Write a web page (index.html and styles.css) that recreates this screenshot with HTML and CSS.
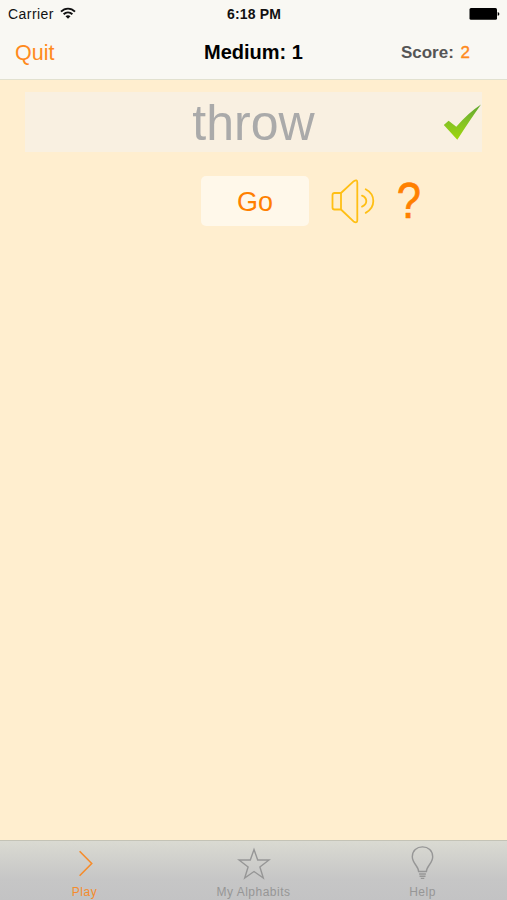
FILE: index.html
```
<!DOCTYPE html>
<html lang="en">
<head>
    <meta charset="UTF-8">
    <meta name="viewport" content="width=device-width, initial-scale=1.0">
    <title>Alphabits</title>
    <link rel="stylesheet" href="styles.css">
</head>
<body>

    <header class="header">
        <div class="status">
            <div class="carrier">
                <span>Carrier</span>
                <svg width="16" height="13" viewBox="0 0 16 13" fill="none" stroke="#111" stroke-width="1.9">
                    <path d="M1 4.7C5 .6 11 .6 15 4.7M3.6 7.3c2.6-2.5 6.2-2.5 8.8 0"/>
                    <path d="M5.5 9.2Q8 7.2 10.5 9.2L8 11.8z" fill="#111" stroke="none"/>
                </svg>
            </div>
            <div class="time">6:18 PM</div>
            <svg class="battery" width="31" height="14" viewBox="0 0 31 14">
                <rect x="0.5" y="1" width="27.5" height="11.7" rx="1.5"/>
                <path d="M28.7 5q1.7 .4 1.7 1.9t-1.7 1.9z"/>
            </svg>
        </div>
        <div class="navbar">
            <a class="quit">Quit</a>
            <h1 class="title">Medium: 1</h1>
            <div class="score">Score: <span>2</span></div>
        </div>
    </header>

    <main class="game">
        <div class="word">
            <span>throw</span>
            <svg class="check" width="39" height="37" viewBox="0 0 39 37">
                <defs>
                    <linearGradient id="green" x1="0" y1="0" x2="0" y2="1">
                        <stop offset="0" stop-color="#5fa52f"/>
                        <stop offset="0.45" stop-color="#82c026"/>
                        <stop offset="1" stop-color="#9fd70c"/>
                    </linearGradient>
                </defs>
                <path d="M.8 21L5.6 16.8 13.3 22.8Q25 9 38 .5 27 16 14.3 35.7z" fill="url(#green)"/>
            </svg>
        </div>
        <div class="controls">
            <button type="button" class="go">Go</button>
            <svg class="speaker" width="44" height="46" viewBox="0 0 44 46" fill="none" stroke="#ffbf14" stroke-width="1.8" stroke-linecap="round" stroke-linejoin="round">
                <path d="M10 15H3.5Q1.5 15 1.5 17V29.5Q1.5 31.5 3.5 31.5H10M10 15V31.5L22.5 43.4Q26.3 45.7 26.3 42.2V4.5Q26.3 1 22.8 3.2z"/>
                <path d="M31 17.6Q35.3 19.3 35.3 23.1T31 28.6M34.7 11.3Q42.3 15.3 42.3 23.1T34.7 34.9"/>
            </svg>
            <div class="hint">?</div>
        </div>
    </main>

    <nav class="tabs">
        <a class="tab active">
            <svg width="34" height="36" viewBox="0 0 34 36" fill="none" stroke="currentColor" stroke-width="1.6">
                <path d="M11.6 7.2L23.7 19.5 11.6 31.8"/>
            </svg>
            <span>Play</span>
        </a>
        <a class="tab">
            <svg width="34" height="36" viewBox="0 0 34 36" fill="none" stroke="currentColor" stroke-width="1.4">
                <path d="M17 5.5L20.7 16H32L22.9 22.9 26.3 34.1 17 27.5 7.7 34.1 11.1 22.9 2 16H13.3z"/>
            </svg>
            <span>My Alphabits</span>
        </a>
        <a class="tab">
            <svg width="34" height="36" viewBox="0 0 34 36" fill="none" stroke="currentColor" stroke-width="1.4">
                <path d="M12.6 27.5C12.6 22.3 6.3 19.3 6.3 12.7 6.3 6.7 10.8 2.9 16.5 2.9S26.7 6.7 26.7 12.7C26.7 19.3 20.4 22.3 20.4 27.5z"/>
                <path d="M13.1 30H19.9M13.5 32.2H19.5M14.8 34.4H18.3"/>
            </svg>
            <span>Help</span>
        </a>
    </nav>

</body>
</html>
```

FILE: styles.css
```
* {
    box-sizing: border-box;
}

body {
    margin: 0;
    height: 100vh;
    display: flex;
    flex-direction: column;
    background-color: #ffeecf;
    font-family: "Liberation Sans", Arial, sans-serif;
}

/* Header */
.header {
    height: 80px;
    background-color: #f9f8f3;
    border-bottom: 1px solid #e2e1cf;
}

.status {
    display: grid;
    grid-template-columns: 1fr auto 1fr;
    align-items: center;
    height: 27px;
    padding: 0 7px 0 8px;
    font-size: 14px;
    color: #111;
}

.carrier {
    display: flex;
    align-items: center;
    gap: 6px;
    letter-spacing: 0.45px;
}

.time {
    font-weight: bold;
    letter-spacing: 0.15px;
}

.battery {
    justify-self: end;
}

.navbar {
    display: grid;
    grid-template-columns: 1fr auto 1fr;
    align-items: center;
    height: 51px;
    padding: 0 37px 0 15px;
}

.quit {
    padding-top: 1px;
    font-size: 21.5px;
    color: #ff8a1c;
}

.title {
    margin: 0 0 0 22px;
    font-size: 20px;
    color: #000;
}

.score {
    justify-self: end;
    font-size: 17px;
    font-weight: bold;
    color: #555;
}

.score span {
    margin-left: 2px;
    font-weight: normal;
    color: #ff8a1c;
    -webkit-text-stroke: 0.4px #ff8a1c;
}

/* Game */
.game {
    flex: 1;
    padding: 12px 25px 0;
}

.word {
    position: relative;
    height: 60px;
    background-color: #f9f0e1;
    font-size: 50px;
    line-height: 62px;
    text-align: center;
    color: #aaa;
}

.check {
    position: absolute;
    top: 12px;
    right: 0;
}

.controls {
    display: flex;
    align-items: center;
    height: 50px;
    margin: 24px 0 0 176px;
}

.go {
    width: 108px;
    height: 50px;
    padding: 2px 0 0;
    border: none;
    border-radius: 5px;
    background-color: #fff8ea;
    font-family: inherit;
    font-size: 27px;
    color: #ff8000;
}

.speaker {
    margin-left: 22px;
}

.hint {
    margin-left: 20px;
    font-size: 50px;
    line-height: 50px;
    color: #ff8000;
    -webkit-text-stroke: 0.7px #ff8000;
    transform: scaleX(0.87);
}

/* Tab bar */
.tabs {
    display: flex;
    height: 60px;
    border-top: 1px solid #c4c3b6;
    background: linear-gradient(#dadad2, #c6c6c6 65%, #c3c3c4);
}

.tab {
    flex: 1;
    display: flex;
    flex-direction: column;
    align-items: center;
    padding-top: 3px;
    font-size: 12px;
    line-height: 16px;
    letter-spacing: 0.5px;
    color: #969696;
}

.tab span {
    margin-top: 4px;
}

.active {
    color: #f58c2c;
}
```
